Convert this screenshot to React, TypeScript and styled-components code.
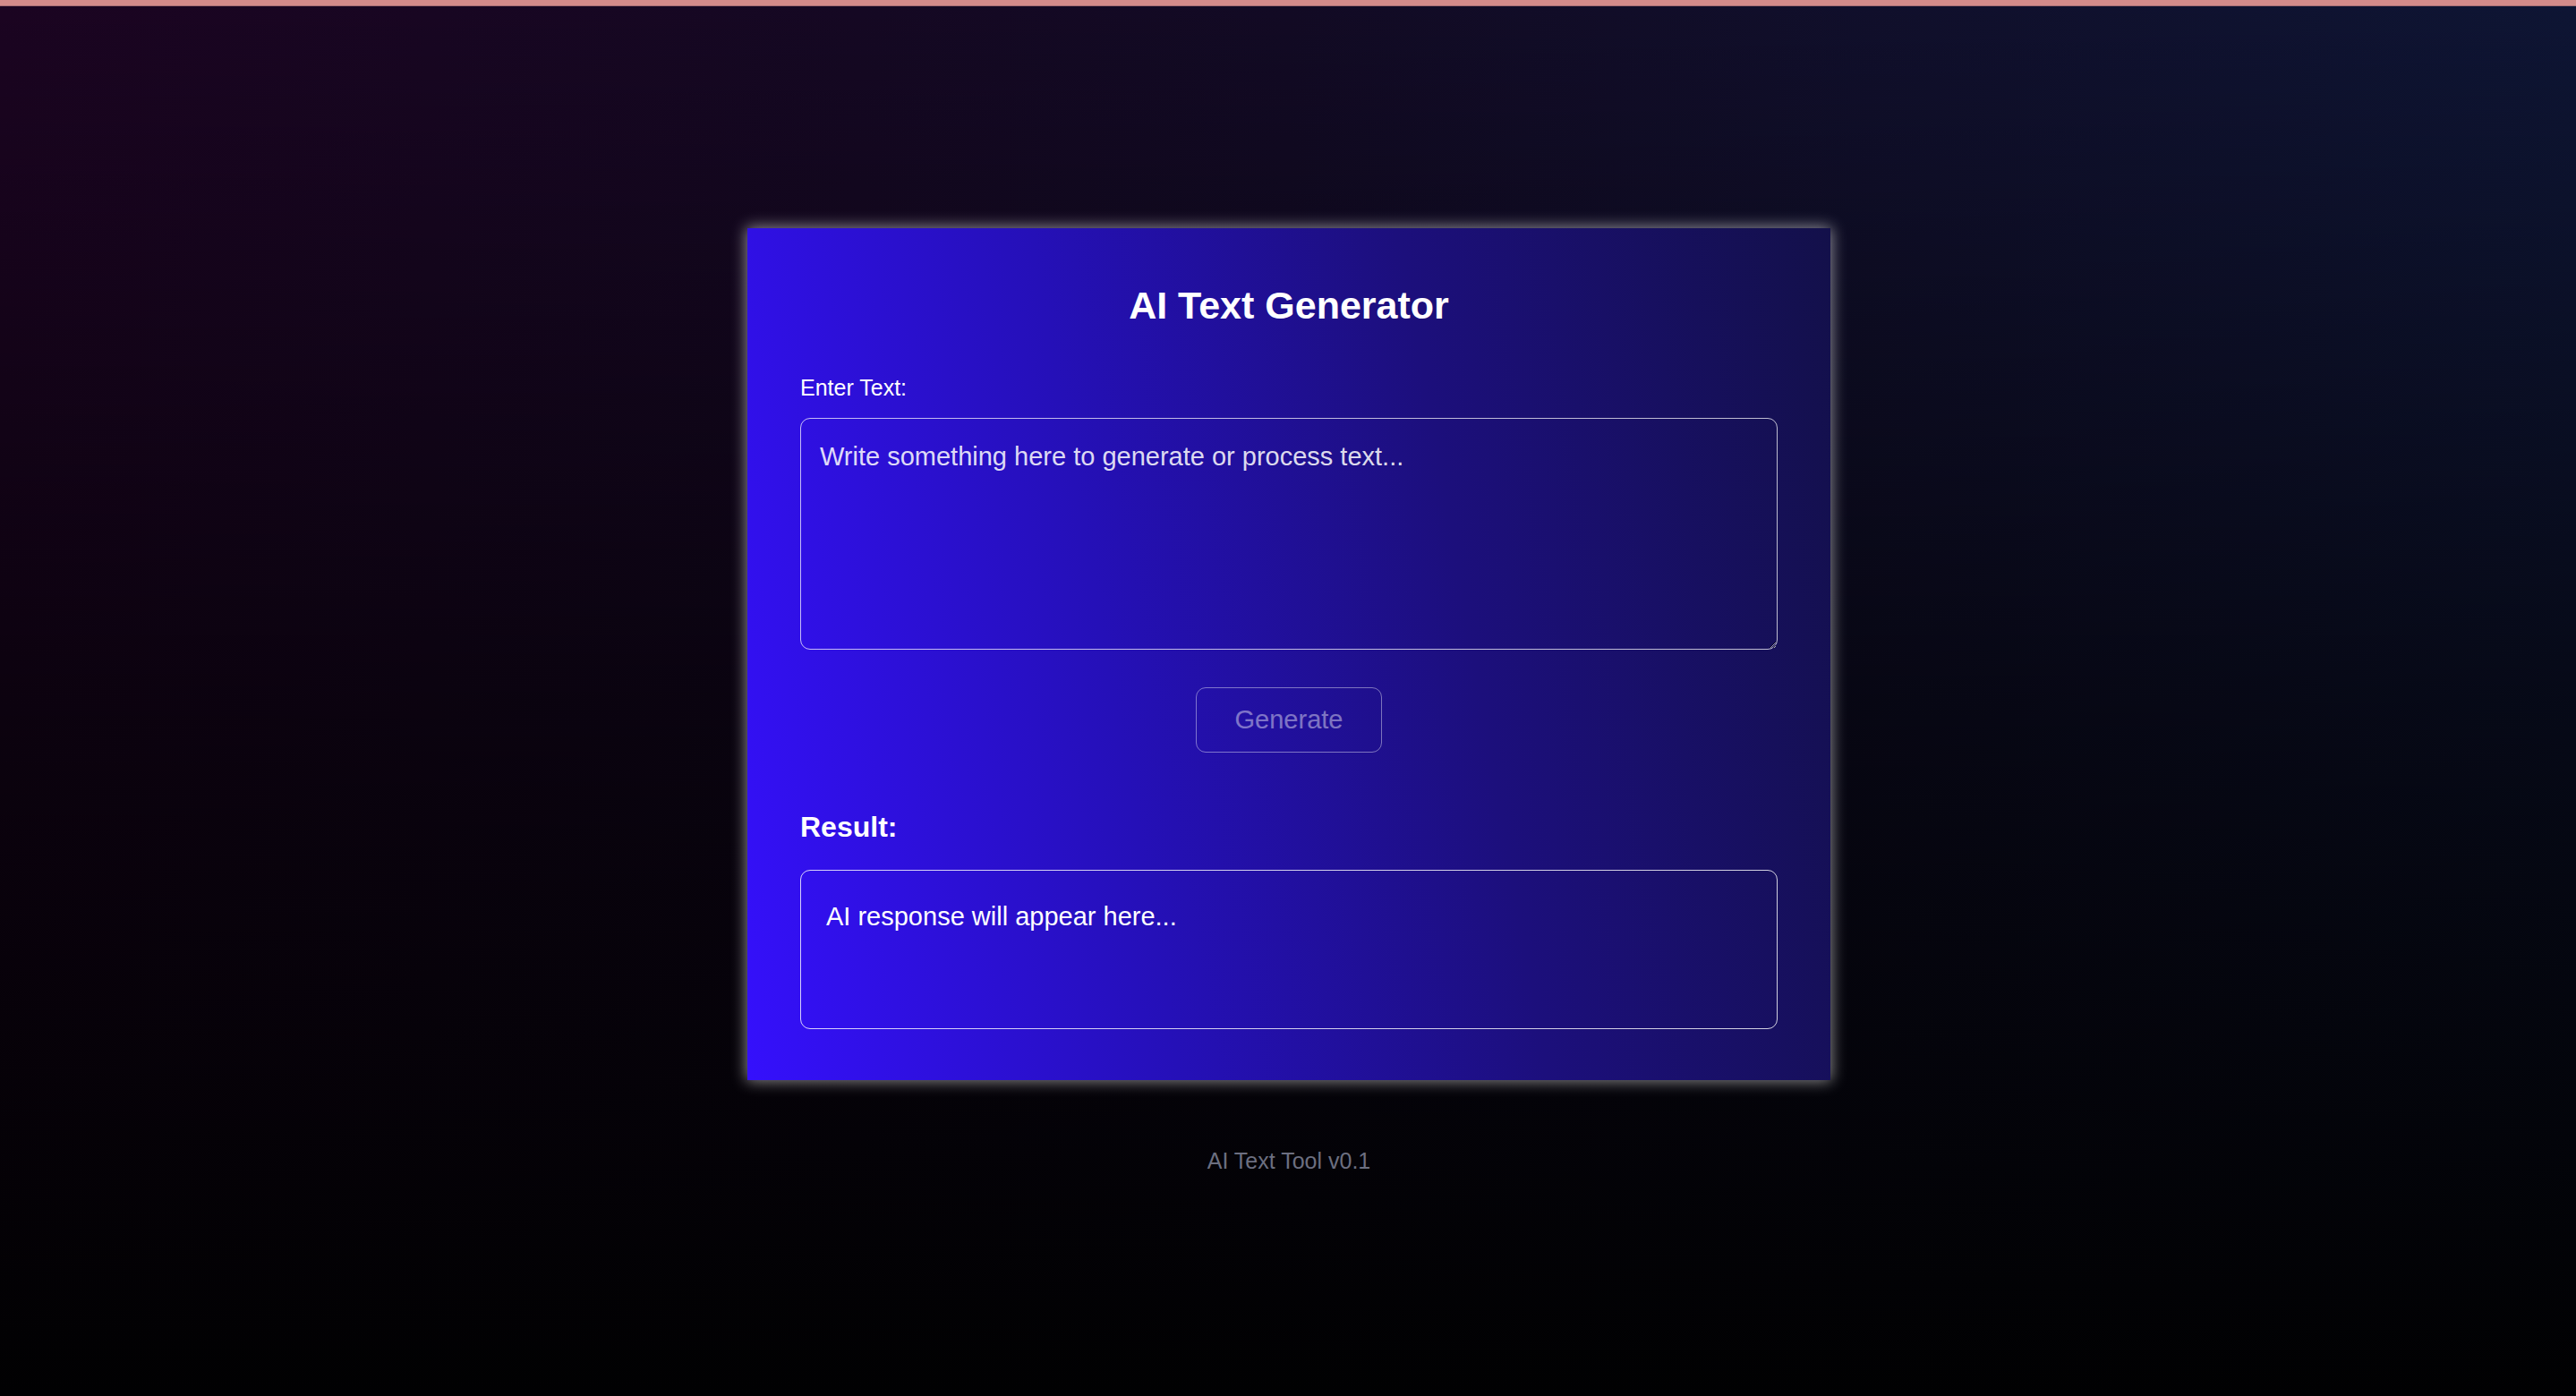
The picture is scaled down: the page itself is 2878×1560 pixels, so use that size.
import React, { useState } from 'react';
import styled, { createGlobalStyle } from 'styled-components';

const GlobalStyle = createGlobalStyle`
  html, body {
    margin: 0;
    padding: 0;
  }
  body {
    font-family: 'Liberation Sans', Arial, Helvetica, sans-serif;
    background: #000;
    color: #fff;
  }
  * {
    box-sizing: border-box;
  }
`;

const Page = styled.div`
  min-height: 100vh;
  display: flex;
  flex-direction: column;
  background:
    linear-gradient(180deg, rgba(0, 0, 0, 0) 0%, rgba(0, 0, 0, 0.55) 50%, #010102 100%),
    linear-gradient(90deg, #1b0421 0%, #120a24 50%, #0e1534 100%);
`;

const TopBar = styled.div`
  height: 7px;
  background: #d38b8a;
  border-bottom: 1px solid #a66d74;
`;

const Main = styled.main`
  flex: 1;
  display: flex;
  flex-direction: column;
  align-items: center;
  justify-content: center;
  padding-left: 2px;
`;

const Card = styled.section`
  width: 1210px;
  padding: 62px 59px 57px;
  display: flex;
  flex-direction: column;
  background: linear-gradient(80deg, #3510fc 0%, #2510b8 35%, #1c0f7c 65%, #13104a 100%);
  box-shadow: 0 0 16px 1px rgba(255, 255, 255, 0.55);
`;

const Title = styled.h1`
  margin: 0 0 53px;
  font-size: 43px;
  font-weight: 700;
  text-align: center;
  color: #fff;
`;

const Label = styled.label`
  display: block;
  font-size: 25px;
  color: #fff;
  margin-bottom: 19px;
`;

const TextInput = styled.textarea`
  width: 100%;
  height: 259px;
  padding: 26px 21px 20px;
  font-family: inherit;
  font-size: 29px;
  color: #fff;
  background: transparent;
  border: 1px solid rgba(255, 255, 255, 0.72);
  border-radius: 11px;
  outline: none;
  resize: both;

  &::placeholder {
    color: rgba(255, 255, 255, 0.86);
  }
`;

const ButtonRow = styled.div`
  display: flex;
  justify-content: center;
  margin: 42px 0 65px;
`;

const GenerateButton = styled.button`
  font-family: inherit;
  font-size: 29px;
  padding: 19px 43px;
  color: #fff;
  background: transparent;
  border: 1px solid #fff;
  border-radius: 11px;
  opacity: 0.42;
  cursor: not-allowed;
`;

const SubTitle = styled.h3`
  margin: 0 0 29px;
  font-size: 32px;
  font-weight: 700;
  color: #fff;
`;

const ResultBox = styled.div`
  min-height: 178px;
  padding: 30px 28px 24px;
  font-size: 29px;
  line-height: 1.5;
  color: #fff;
  border: 1px solid rgba(255, 255, 255, 0.8);
  border-radius: 11px;
`;

const Footer = styled.footer`
  margin-top: 76px;
  font-size: 25px;
  color: #6c6f80;
  text-align: center;
`;

export default function App() {
  const [text, setText] = useState('');

  return (
    <>
      <GlobalStyle />
      <Page>
        <TopBar />
        <Main>
          <Card>
            <Title>AI Text Generator</Title>
            <Label htmlFor="prompt">Enter Text:</Label>
            <TextInput
              id="prompt"
              value={text}
              onChange={(e) => setText(e.target.value)}
              placeholder="Write something here to generate or process text..."
            />
            <ButtonRow>
              <GenerateButton disabled={!text.trim()}>Generate</GenerateButton>
            </ButtonRow>
            <SubTitle>Result:</SubTitle>
            <ResultBox>AI response will appear here...</ResultBox>
          </Card>
          <Footer>AI Text Tool v0.1</Footer>
        </Main>
      </Page>
    </>
  );
}
